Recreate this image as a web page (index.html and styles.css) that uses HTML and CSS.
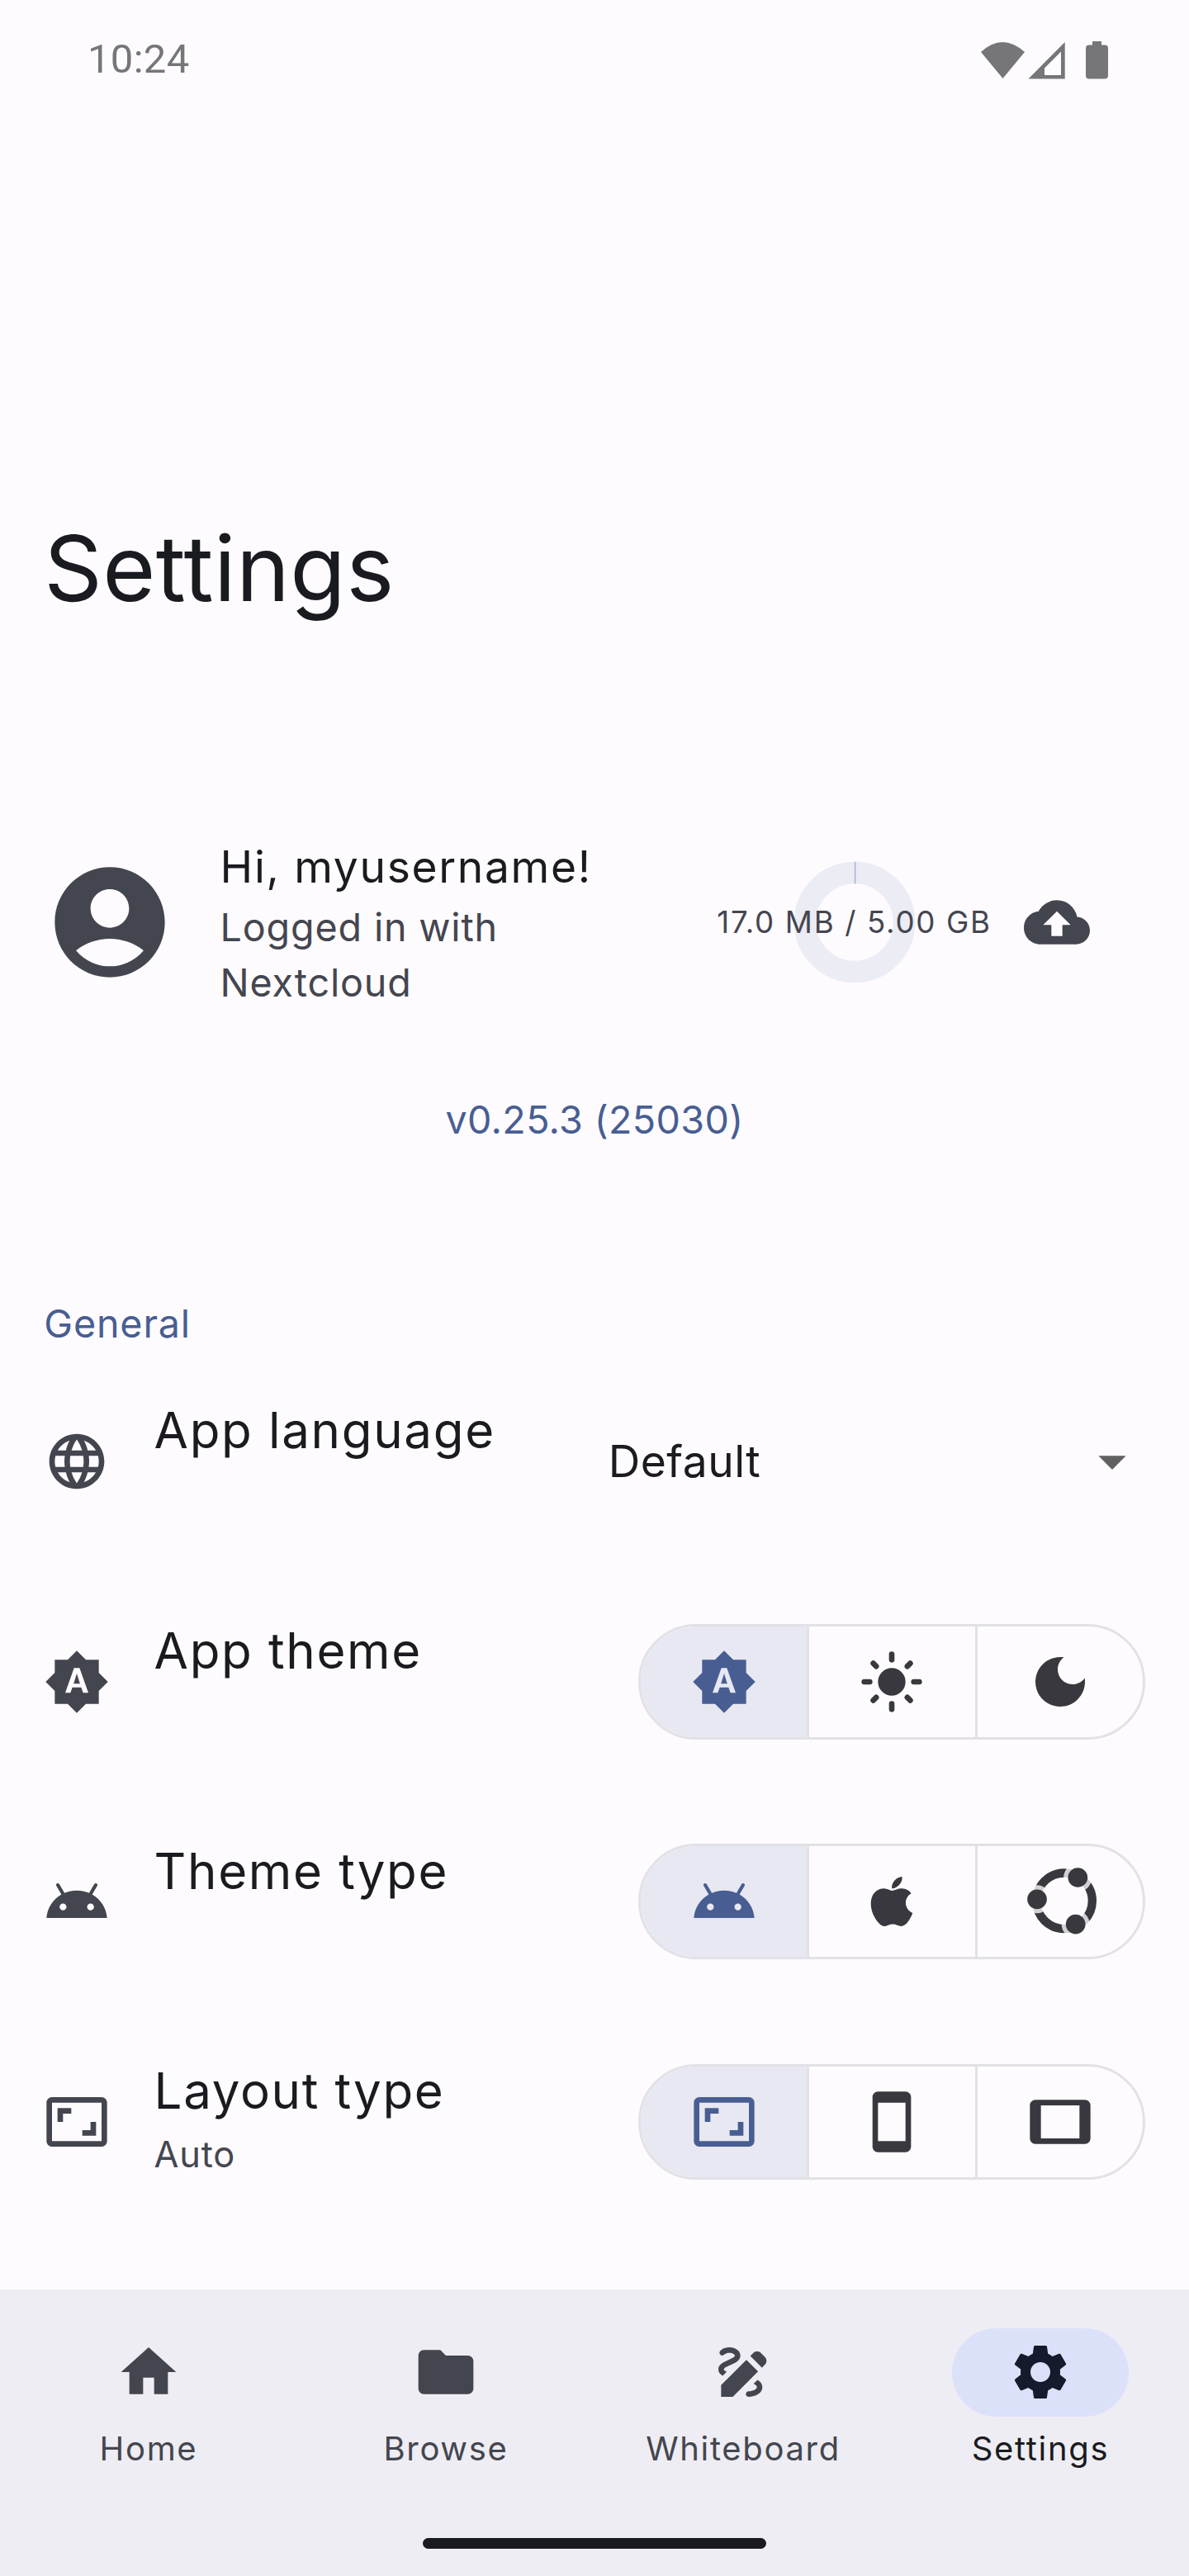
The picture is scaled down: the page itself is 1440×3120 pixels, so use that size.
FILE: index.html
```html
<!DOCTYPE html>
<html lang="en">
<head>
<meta charset="utf-8">
<title>Settings</title>
<link rel="stylesheet" href="styles.css">
</head>
<body>
<svg class="sprite" aria-hidden="true">
  <symbol id="auto" viewBox="0 0 24 24"><path d="M10.85 12.65h2.3L12 9l-1.15 3.65zM20 8.69V4h-4.69L12 .69 8.69 4H4v4.69L.69 12 4 15.31V20h4.69L12 23.31 15.31 20H20v-4.69L23.31 12 20 8.69zM14.3 16l-.7-2h-3.2l-.7 2H7.8L11 7h2l3.2 9h-1.9z"/></symbol>
  <symbol id="android" viewBox="0 0 24 24"><path d="M17.6 9.48l1.84-3.18c.16-.31.04-.69-.26-.85-.29-.15-.65-.06-.83.22l-1.88 3.24c-2.86-1.21-6.08-1.21-8.94 0L5.65 5.67c-.19-.29-.58-.38-.87-.2-.28.18-.37.54-.22.83L6.4 9.48C3.3 11.25 1.28 14.44 1 18h22c-.28-3.56-2.3-6.75-5.4-8.52zM7 15.25a1.25 1.25 0 1 1 0-2.5 1.25 1.25 0 0 1 0 2.5zM17 15.25a1.25 1.25 0 1 1 0-2.5 1.25 1.25 0 0 1 0 2.5z"/></symbol>
  <symbol id="aspect" viewBox="0 0 24 24"><path d="M19 12h-2v3h-3v2h5v-5zM7 9h3V7H5v5h2V9zm14-6H3c-1.1 0-2 .9-2 2v14c0 1.1.9 2 2 2h18c1.1 0 2-.9 2-2V5c0-1.1-.9-2-2-2zm0 16.01H3V4.99h18v14.02z"/></symbol>
</svg>

<header class="status">
  <span class="clock">10:24</span>
  <svg class="status-icons" viewBox="0 0 156 48">
    <path d="M1 15Q27-9 54 15L27.5 47z"/>
    <path fill-rule="evenodd" d="M102.7 3v44.5H58.5zM98 14.500L78 34.500V43H98z"/>
    <path d="M136 2h11v4.500h4a4 4 0 0 1 4 4v33a4 4 0 0 1-4 4h-19a4 4 0 0 1-4-4v-33a4 4 0 0 1 4-4h4z"/>
  </svg>
</header>

<main class="page">
  <h1 class="title">Settings</h1>

  <section class="profile">
    <svg class="avatar" viewBox="0 0 24 24"><path d="M12 2C6.48 2 2 6.48 2 12s4.480 10 10 10 10-4.480 10-10S17.520 2 12 2zm0 4c1.930 0 3.500 1.570 3.500 3.500S13.930 13 12 13s-3.500-1.570-3.500-3.500S10.070 6 12 6zm0 14c-2.030 0-4.430-.82-6.140-2.880C7.550 15.800 9.680 15 12 15s4.450.8 6.140 2.120C16.430 19.180 14.030 20 12 20z"/></svg>
    <div class="account">
      <p class="greeting">Hi, myusername!</p>
      <p class="service">Logged in with<br>Nextcloud</p>
    </div>
    <div class="quota">
      <svg class="ring" viewBox="0 0 148 148">
        <circle class="ring-track" cx="74" cy="74" r="60"/>
        <path class="ring-value" d="M74.600 .7v26.700"/>
      </svg>
      <span class="quota-text">17.0 MB / 5.00 GB</span>
    </div>
    <svg class="icon" viewBox="0 0 24 24"><path d="M19.350 10.040C18.670 6.590 15.640 4 12 4 9.110 4 6.600 5.640 5.350 8.040 2.340 8.360 0 10.910 0 14c0 3.310 2.690 6 6 6h13c2.760 0 5-2.240 5-5 0-2.640-2.050-4.780-4.650-4.960zM14 13v4h-4v-4H7l5-5 5 5h-3z"/></svg>
  </section>

  <p class="version">v0.25.3 (25030)</p>

  <h2 class="group">General</h2>

  <div class="row">
    <svg class="icon" viewBox="0 0 24 24"><path d="M11.990 2C6.470 2 2 6.480 2 12s4.470 10 9.990 10C17.520 22 22 17.520 22 12S17.520 2 11.990 2zm6.930 6h-2.950c-.32-1.250-.78-2.450-1.380-3.560 1.840.63 3.370 1.910 4.330 3.560zM12 4.040c.83 1.200 1.480 2.530 1.910 3.960h-3.820c.43-1.430 1.080-2.760 1.910-3.960zM4.260 14C4.100 13.360 4 12.690 4 12s.1-1.360.26-2h3.380c-.08.66-.14 1.320-.14 2 0 .68.060 1.340.14 2H4.260zm.82 2h2.950c.32 1.250.78 2.450 1.380 3.560-1.840-.63-3.370-1.900-4.330-3.560zm2.950-8H5.080c.96-1.660 2.490-2.930 4.330-3.560C8.810 5.550 8.350 6.750 8.030 8zM12 19.960c-.83-1.200-1.480-2.530-1.910-3.960h3.820c-.43 1.430-1.080 2.760-1.910 3.960zM14.340 14H9.660c-.09-.66-.16-1.320-.16-2 0-.68.070-1.350.16-2h4.680c.09.65.16 1.320.16 2 0 .68-.07 1.340-.16 2zm.25 5.560c.6-1.110 1.060-2.310 1.380-3.560h2.950c-.96 1.650-2.490 2.930-4.330 3.560zM16.360 14c.08-.66.14-1.320.14-2 0-.68-.06-1.340-.14-2h3.380c.16.64.26 1.310.26 2s-.1 1.360-.26 2h-3.380z"/></svg>
    <div class="label"><p class="name">App language</p><p class="value"></p></div>
    <div class="select"><span>Default</span><svg class="icon arrow" viewBox="0 0 24 24"><path d="M7 10l5 5 5-5z"/></svg></div>
  </div>

  <div class="row">
    <svg class="icon"><use href="#auto"/></svg>
    <div class="label"><p class="name">App theme</p><p class="value"></p></div>
    <div class="segments">
      <span class="segment selected"><svg class="icon"><use href="#auto"/></svg></span>
      <span class="segment"><svg class="icon" viewBox="0 0 24 24"><circle cx="12" cy="12" r="5"/><path class="rays" d="M2 12h2M20 12h2M12 2v2M12 20v2M5.285 5.285l1.060 1.060M17.655 17.655l1.060 1.060M18.715 5.285l-1.060 1.060M6.345 17.655l-1.060 1.060"/></svg></span>
      <span class="segment"><svg class="icon" viewBox="0 0 24 24"><path d="M12 3c-4.970 0-9 4.030-9 9s4.030 9 9 9 9-4.030 9-9c0-.46-.04-.92-.1-1.360-.98 1.370-2.580 2.260-4.400 2.260-2.980 0-5.400-2.420-5.400-5.400 0-1.810.89-3.420 2.260-4.400C12.920 3.040 12.460 3 12 3z"/></svg></span>
    </div>
  </div>

  <div class="row">
    <svg class="icon"><use href="#android"/></svg>
    <div class="label"><p class="name">Theme type</p><p class="value"></p></div>
    <div class="segments">
      <span class="segment selected"><svg class="icon"><use href="#android"/></svg></span>
      <span class="segment"><svg class="icon" viewBox="0 0 24 24"><path d="M17.050 20.280c-.98.95-2.050.8-3.080.35-1.090-.46-2.090-.48-3.240 0-1.440.62-2.200.44-3.060-.35C2.790 15.250 3.510 7.590 9.050 7.310c1.350.07 2.290.74 3.080.8 1.180-.24 2.310-.93 3.570-.84 1.510.12 2.650.72 3.400 1.800-3.120 1.870-2.380 5.980.48 7.130-.57 1.500-1.310 2.990-2.540 4.090zM12.030 7.250c-.15-2.230 1.660-4.070 3.740-4.250.29 2.580-2.340 4.500-3.740 4.250z"/></svg></span>
      <span class="segment"><svg class="icon" viewBox="28 34 240 240">
        <mask id="gaps" maskUnits="userSpaceOnUse" x="0" y="0" width="312" height="312">
          <rect width="312" height="312" fill="#fff"/>
          <circle cx="212" cy="67" r="51.500"/><circle cx="64" cy="146" r="51"/><circle cx="204" cy="237" r="51"/>
        </mask>
        <circle class="orbit" cx="163" cy="152" r="101.500" mask="url(#gaps)"/>
        <circle cx="212" cy="67" r="35.500"/><circle cx="64" cy="146" r="35.500"/><circle cx="204" cy="237" r="35.500"/>
      </svg></span>
    </div>
  </div>

  <div class="row">
    <svg class="icon"><use href="#aspect"/></svg>
    <div class="label"><p class="name">Layout type</p><p class="value">Auto</p></div>
    <div class="segments">
      <span class="segment selected"><svg class="icon"><use href="#aspect"/></svg></span>
      <span class="segment"><svg class="icon" viewBox="0 0 24 24"><path d="M17 1.010L7 1c-1.100 0-1.990.9-1.990 2v18c0 1.100.89 2 1.990 2h10c1.100 0 2-.9 2-2V3c0-1.100-.9-1.990-2-1.990zM17 19H7V5h10v14z"/></svg></span>
      <span class="segment"><svg class="icon" viewBox="0 0 24 24"><path d="M21 4H3c-1.100 0-2 .9-2 2v12c0 1.100.9 2 2 2h18c1.100 0 1.990-.9 1.990-2L23 6c0-1.100-.9-2-2-2zm-2 14H5V6h14v12z"/></svg></span>
    </div>
  </div>
</main>

<nav class="nav">
  <div class="tabs">
    <a class="tab"><span class="pill"><svg class="icon" viewBox="0 0 24 24"><path d="M10 20v-6h4v6h5v-8h3L12 3 2 12h3v8z"/></svg></span>Home</a>
    <a class="tab"><span class="pill"><svg class="icon" viewBox="0 0 24 24"><path d="M10 4H4c-1.100 0-1.990.9-1.990 2L2 18c0 1.100.9 2 2 2h16c1.100 0 2-.9 2-2V8c0-1.100-.9-2-2-2h-8l-2-2z"/></svg></span>Browse</a>
    <a class="tab"><span class="pill"><svg class="icon" viewBox="0 0 24 24"><path d="M18.850 10.390l1.060-1.060c.78-.78.78-2.050 0-2.830L18.500 5.090c-.78-.78-2.050-.78-2.830 0l-1.060 1.060 4.240 4.240zM13.190 7.560L4 16.760V21h4.240l9.190-9.190-4.240-4.250zM19 17.500c0 2.190-2.540 3.500-5 3.500-.55 0-1-.45-1-1s.45-1 1-1c1.540 0 3-.73 3-1.500 0-.47-.48-.87-1.230-1.200l1.480-1.480c1.070.63 1.750 1.470 1.750 2.680zM4.580 13.350C3.610 12.790 3 12.060 3 11c0-1.800 1.890-2.630 3.560-3.360C7.590 7.180 9 6.560 9 6c0-.41-.78-1-2-1-1.260 0-1.800.61-1.830.64-.35.41-.98.46-1.400.12-.41-.34-.49-.95-.15-1.380C3.730 4.240 4.760 3 7 3s4 1.320 4 3c0 1.870-1.930 2.720-3.640 3.470C6.420 9.880 5 10.500 5 11c0 .31.43.6 1.070.86l-1.490 1.490z"/></svg></span>Whiteboard</a>
    <a class="tab active"><span class="pill"><svg class="icon" viewBox="0 0 24 24"><path d="M19.140 12.940c.04-.3.060-.61.060-.94 0-.32-.02-.64-.07-.94l2.030-1.580c.18-.14.23-.41.12-.61l-1.920-3.320c-.12-.22-.37-.29-.59-.22l-2.390.96c-.5-.38-1.030-.7-1.620-.94L14.400 2.810c-.04-.24-.24-.41-.48-.41h-3.840c-.24 0-.43.17-.47.41L9.250 5.350c-.59.24-1.130.57-1.620.94L5.240 5.330c-.22-.08-.47 0-.59.22L2.740 8.870c-.12.21-.08.47.12.61l2.030 1.580c-.05.3-.09.63-.09.94s.02.64.07.94l-2.030 1.580c-.18.14-.23.41-.12.61l1.920 3.320c.12.22.37.29.59.22l2.390-.96c.5.38 1.030.7 1.620.94l.36 2.540c.05.24.24.41.48.41h3.840c.24 0 .44-.17.47-.41l.36-2.540c.59-.24 1.130-.56 1.620-.94l2.390.96c.22.08.47 0 .59-.22l1.920-3.320c.12-.22.070-.47-.12-.61l-2.010-1.580zM12 15.600c-1.980 0-3.600-1.620-3.600-3.600s1.620-3.600 3.600-3.600 3.600 1.620 3.600 3.600-1.620 3.600-3.600 3.600z"/></svg></span>Settings</a>
  </div>
  <div class="handle"></div>
</nav>
</body>
</html>
```
FILE: styles.css
```css
* { box-sizing: border-box; }

body {
  margin: 0;
  width: 1440px;
  height: 3120px;
  display: flex;
  flex-direction: column;
  background: #fefbff;
  color: #1a1b20;
  font-family: Inter, sans-serif;
  font-weight: 400;
}

h1, h2, p { margin: 0; font-weight: 400; }
svg { display: block; flex: none; fill: currentColor; overflow: visible; }
.sprite { position: absolute; width: 0; height: 0; }
.icon { width: 80px; height: 80px; }

.status {
  height: 144px;
  padding: 0 97px 0 106px;
  display: flex;
  align-items: center;
  justify-content: space-between;
  color: #76767a;
}
.clock { font: 400 49px/60px Roboto, sans-serif; letter-spacing: 0.3px; }
.status-icons { width: 156px; height: 48px; }

.page { flex: 1; }

.title {
  height: 200px;
  margin: 444px 53.3px 0;
  font-size: 110px;
  line-height: 200px;
  letter-spacing: 0.4px;
}

.profile {
  display: flex;
  align-items: center;
  height: 214px;
  margin: 222px 120px 0 53.3px;
  color: #44464f;
}
.avatar { width: 160px; height: 160px; }
.account { flex: 1; margin-left: 53.3px; }
.greeting { color: #1a1b20; font-size: 53.33px; line-height: 80px; letter-spacing: 1.67px; }
.service { font-size: 46.67px; line-height: 66.67px; letter-spacing: 0.83px; }
.quota {
  display: grid;
  place-items: center;
  width: 333px;
  margin-right: 39px;
}
.quota > * { grid-area: 1 / 1; }
.ring { width: 148px; height: 148px; fill: none; }
.ring-track { stroke: #ebecf4; stroke-width: 26.67px; }
.ring-value { stroke: #a9b3d0; stroke-width: 1.5px; }
.quota-text { font-size: 36.67px; line-height: 54px; letter-spacing: 1.67px; white-space: nowrap; }

.version {
  margin-top: 99px;
  color: #485e92;
  font-size: 46.67px;
  line-height: 66px;
  text-align: center;
  letter-spacing: 0.33px;
}
.group {
  margin: 180.67px 0 0 53.3px;
  color: #485e92;
  font-size: 46.67px;
  line-height: 67px;
  letter-spacing: 0.83px;
}

.row {
  display: flex;
  align-items: center;
  height: 266.67px;
  padding: 0 53.3px;
  color: #44464f;
}
.label { flex: 1; margin-left: 53.3px; }
.name { color: #1a1b20; height: 78.5px; font-size: 60px; line-height: 78.5px; letter-spacing: 1.67px; }
.value { height: 74.5px; font-size: 43.33px; line-height: 74.5px; letter-spacing: 0.83px; }

.select {
  display: flex;
  align-items: center;
  justify-content: space-between;
  width: 650px;
  color: #1c1b1f;
  font-size: 53.33px;
  letter-spacing: 0.5px;
}
.arrow { color: #616161; }

.segments {
  display: grid;
  grid-template-columns: 201px 1fr 1fr;
  width: 613.3px;
  height: 140px;
  border: 3.33px solid #e2e1e5;
  border-radius: 70px;
  overflow: hidden;
}
.segment {
  display: flex;
  align-items: center;
  justify-content: center;
  color: #39383e;
}
.segment + .segment { border-left: 3.33px solid #e2e1e5; }
.selected { background: #e7e8f2; color: #485e92; }
.rays { fill: none; stroke: currentColor; stroke-width: 2; stroke-linecap: round; }
.orbit { fill: none; stroke: currentColor; stroke-width: 31; }

.nav {
  height: 346.67px;
  padding: 46.67px 0 33px;
  background: #eeedf3;
  color: #44464f;
  display: flex;
  flex-direction: column;
  justify-content: space-between;
}
.tabs { display: flex; }
.tab {
  flex: 1;
  display: flex;
  flex-direction: column;
  align-items: center;
  gap: 12px;
  font-size: 40px;
  line-height: 53.3px;
  letter-spacing: 1.67px;
}
.pill {
  display: flex;
  align-items: center;
  justify-content: center;
  width: 213.3px;
  height: 106.67px;
  border-radius: 54px;
}
.active { color: #1a1b20; }
.active .pill { background: #dce1fa; color: #151b2c; }
.handle { width: 416px; height: 13.3px; margin: 0 auto; border-radius: 6.67px; background: #1a1b20; }
```
